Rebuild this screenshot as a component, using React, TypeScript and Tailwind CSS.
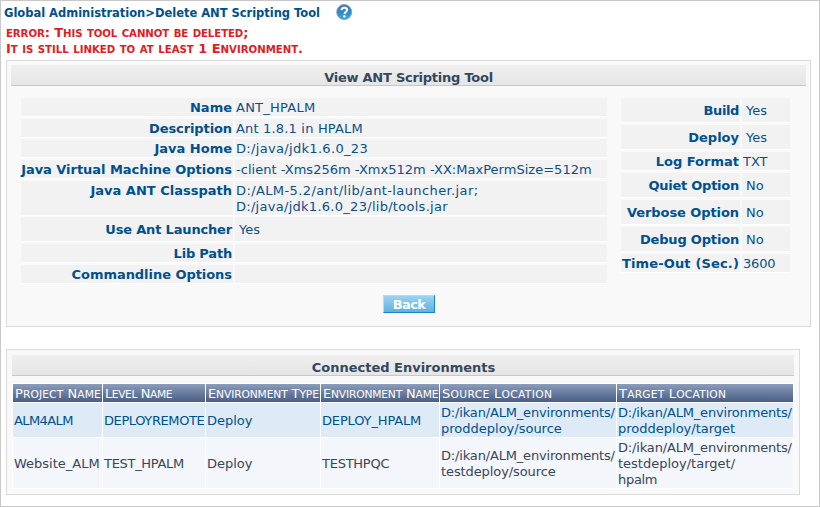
type Field = { label: string; lines: string[]; h: string; pad?: string; w?: string };

const tracking: Record<string, string> = {
  ANT_HPALM: 'tracking-[0.25px]',
  'Ant 1.8.1 in HPALM': 'tracking-[0.18px]',
  'D:/java/jdk1.6.0_23': 'tracking-[0.32px]',
  '-client -Xms256m -Xmx512m -XX:MaxPermSize=512m': 'tracking-[0.02px]',
  'D:/ALM-5.2/ant/lib/ant-launcher.jar;': 'tracking-[0.39px]',
  'D:/java/jdk1.6.0_23/lib/tools.jar': 'tracking-[0.28px]',
  Description: 'tracking-[-0.1px]',
  'Java Virtual Machine Options': 'tracking-[-0.04px]',
  'Use Ant Launcher': 'tracking-[-0.17px]',
  'Lib Path': 'tracking-[-0.2px]',
  'Commandline Options': 'tracking-[-0.05px]',
  Build: 'tracking-[-0.4px]',
  'Quiet Option': 'tracking-[-0.25px]',
  'Verbose Option': 'tracking-[-0.08px]',
  'Debug Option': 'tracking-[-0.18px]',
  'Time-Out (Sec.)': 'tracking-[0.15px]',
  '3600': 'tracking-[-0.2px]',
  'D:/ikan/ALM_environments/': 'tracking-[-0.17px]',
  'testdeploy/source': 'tracking-[-0.1px]',
  hpalm: 'tracking-[-0.3px]',
  DEPLOYREMOTE: 'tracking-[-0.4px]',
  TEST_HPALM: 'tracking-[-0.3px]',
  ALM4ALM: 'tracking-[-0.6px]',
  DEPLOY_HPALM: 'tracking-[-0.15px]',
  TESTHPQC: 'tracking-[-0.25px]',
  'View ANT Scripting Tool': 'tracking-[-0.25px]',
  'Project Name': 'tracking-[0.1px]',
  'Level Name': 'tracking-[-0.4px]',
  'Environment Type': 'tracking-[-0.13px]',
  'Environment Name': 'tracking-[-0.18px]',
  'Source Location': 'tracking-[0.32px]',
  'Target Location': 'tracking-[0.2px]',
};

const general: Field[] = [
  { label: 'Name', lines: ['ANT_HPALM'], h: 'h-[18px] mb-[3px]' },
  { label: 'Description', lines: ['Ant 1.8.1 in HPALM'], h: 'h-[18px] mb-[2px]' },
  { label: 'Java Home', lines: ['D:/java/jdk1.6.0_23'], h: 'h-[18px] mb-[3px]' },
  { label: 'Java Virtual Machine Options', lines: ['-client -Xms256m -Xmx512m -XX:MaxPermSize=512m'], h: 'h-[18px] mb-[3px]' },
  { label: 'Java ANT Classpath', lines: ['D:/ALM-5.2/ant/lib/ant-launcher.jar;', 'D:/java/jdk1.6.0_23/lib/tools.jar'], h: 'h-[34px] mb-[2px]' },
  { label: 'Use Ant Launcher', lines: ['Yes'], h: 'h-[24px] mb-[3px]', pad: 'pt-[5px]', w: 'pl-[4px]' },
  { label: 'Lib Path', lines: [''], h: 'h-[18px] mb-[3px]' },
  { label: 'Commandline Options', lines: [''], h: 'h-[18px]' },
];

const flag = { h: 'h-[24px] mb-[3px]', pad: 'pt-[5px]', w: 'pl-[4px]' };
const options: Field[] = [
  { label: 'Build', lines: ['Yes'], ...flag },
  { label: 'Deploy', lines: ['Yes'], ...flag },
  { label: 'Log Format', lines: ['TXT'], h: 'h-[18px] mb-[3px]' },
  { label: 'Quiet Option', lines: ['No'], ...flag },
  { label: 'Verbose Option', lines: ['No'], ...flag },
  { label: 'Debug Option', lines: ['No'], ...flag },
  { label: 'Time-Out (Sec.)', lines: ['3600'], h: 'h-[18px]' },
];

function Fields({ rows, cols }: { rows: Field[]; cols: string }) {
  return (
    <div>
      {rows.map((r) => (
        <div key={r.label} className={`grid gap-[2px] leading-4 ${cols} ${r.h}`}>
          <div className={`whitespace-nowrap bg-[#f2f2f2] pr-px text-right font-bold text-[#00508f] shadow-[0_1px_0_#fff] ${r.pad ?? 'pt-[2px]'} ${tracking[r.label] ?? ''}`}>
            {r.label}
          </div>
          <div className={`whitespace-nowrap bg-[#f2f2f2] shadow-[0_1px_0_#fff] ${r.pad ?? 'pt-[2px]'} ${r.w ?? 'pl-px'}`}>
            {r.lines.map((l) => (
              <div key={l} className={tracking[l]}>{l}</div>
            ))}
          </div>
        </div>
      ))}
    </div>
  );
}

function Title({ children }: { children: string }) {
  return (
    <div className={`h-[21px] border-b border-[#c8c8c8] bg-linear-to-b from-[#efefef] to-[#e5e5e5] pt-[4px] text-center font-bold leading-[18px] text-[#33475f] ${tracking[children] ?? 'pl-px'}`}>
      {children}
    </div>
  );
}

function SmallCaps({ text, size }: { text: string; size: string }) {
  return (
    <>
      {text.split(/([a-z]+)/).map((part, i) => (
        <span key={i} className={i % 2 ? `uppercase ${size}` : ''}>{part}</span>
      ))}
    </>
  );
}

const heads = ['Project Name', 'Level Name', 'Environment Type', 'Environment Name', 'Source Location', 'Target Location'];
const environments = [
  {
    style: 'h-[34px] bg-[#deebf7] text-[#00508f]',
    cells: [['ALM4ALM'], ['DEPLOYREMOTE'], ['Deploy'], ['DEPLOY_HPALM'], ['D:/ikan/ALM_environments/', 'proddeploy/source'], ['D:/ikan/ALM_environments/', 'proddeploy/target']],
  },
  {
    style: 'h-[50px] bg-[#f3f6fb] text-[#3b4559]',
    cells: [['Website_ALM'], ['TEST_HPALM'], ['Deploy'], ['TESTHPQC'], ['D:/ikan/ALM_environments/', 'testdeploy/source'], ['D:/ikan/ALM_environments/', 'testdeploy/target/', 'hpalm']],
  },
];
const columns = 'grid grid-cols-[89px_102px_114px_118px_176px_176px] gap-px';

export default function App() {
  return (
    <div className="h-[507px] w-[820px] overflow-hidden border border-[#c8c8c8] bg-white pl-[5px] font-['DejaVu_Sans',Verdana,sans-serif] text-[13px] text-[#0b4f8a]">
      <div className="-ml-[2px] flex h-[24px] items-start whitespace-nowrap text-[11.5px] font-bold leading-[14px] text-[#00508f]">
        <div className="w-[332px] pt-[5px] tracking-[-0.02px]">Global Administration&gt;Delete ANT Scripting Tool</div>
        <svg className="mt-[3px]" width="17" height="17" viewBox="0 0 17 17">
          <defs>
            <linearGradient id="help" x1="0" y1="0" x2="0" y2="1">
              <stop offset="0" stopColor="#3f7fb8" />
              <stop offset=".5" stopColor="#2f86c8" />
              <stop offset="1" stopColor="#35aee8" />
            </linearGradient>
          </defs>
          <circle cx="8.2" cy="8" r="7.5" fill="url(#help)" stroke="#7e9db9" strokeWidth=".9" />
          <path d="M5.4 6.3c.1-1.8 1.3-2.6 2.9-2.6 1.6 0 2.8.9 2.8 2.3 0 1.8-2.6 1.9-2.6 3.9" fill="none" stroke="#fff" strokeWidth="2" />
          <circle cx="8.4" cy="12.3" r="1.2" fill="#fff" />
        </svg>
      </div>
      <div className="h-[35px] whitespace-nowrap font-bold leading-4 text-[#e31b23]">
        <div className="h-4 tracking-[-0.09px]">
          <SmallCaps text="error: This tool cannot be deleted;" size="text-[10.2px]" />
        </div>
        <div className="h-4 tracking-[-0.03px]">
          <SmallCaps text="It is still linked to at least 1 Environment." size="text-[10.2px]" />
        </div>
      </div>

      <div className="h-[267px] w-[805px] border border-[#dadada] bg-[#f9f9f9] px-[4px] pt-[4px]">
        <Title>View ANT Scripting Tool</Title>
        <div className="flex gap-[14px] pl-[10px] pt-[12px]">
          <Fields rows={general} cols="grid-cols-[212px_372px]" />
          <Fields rows={options} cols="grid-cols-[119px_48px]" />
        </div>
        <div className="flex justify-center pl-px pt-[12px]">
          <button className="h-[18px] w-[52px] border border-b-[#1985c8] border-l-[#a9e2f8] border-r-[#1985c8] border-t-[#a9e2f8] bg-linear-to-b from-[#9bd3f1] to-[#5eb1df] pt-px font-bold leading-4 tracking-[-0.6px] text-white">
            Back
          </button>
        </div>
      </div>

      <div className="mt-[22px] h-[146px] w-[794px] border border-[#dadada] bg-[#f9f9f9] px-[5px] pt-[5px]">
        <Title>Connected Environments</Title>
        <div className="mt-[7px] flex flex-col gap-px border border-white bg-white leading-4">
          <div className={`${columns} h-[18px]`}>
            {heads.map((h) => (
              <div key={h} className={`h-[18px] whitespace-nowrap bg-linear-to-b from-[#8c9dbb] to-[#4a5e85] pl-[2px] pt-[2px] text-white ${tracking[h]}`}>
                <SmallCaps text={h} size="text-[10.7px]" />
              </div>
            ))}
          </div>
          {environments.map((e) => (
            <div key={e.cells[0][0]} className={columns}>
              {e.cells.map((lines, i) => (
                <div key={i} className={`flex flex-col justify-center whitespace-nowrap pl-px pt-[2px] ${e.style}`}>
                  {lines.map((l) => (
                    <div key={l} className={tracking[l]}>{l}</div>
                  ))}
                </div>
              ))}
            </div>
          ))}
        </div>
      </div>
    </div>
  );
}
